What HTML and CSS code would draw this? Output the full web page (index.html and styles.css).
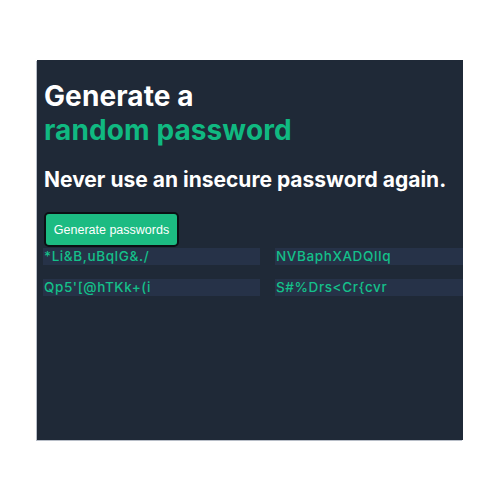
FILE: index.html
```html
<!DOCTYPE html>
<html>
<head>
<meta charset="utf-8">
<link rel="stylesheet" href="styles.css">
</head>
<body>
<main class="panel">
  <h1 class="title">Generate a<br><span class="accent">random password</span></h1>
  <p class="subtitle">Never use an insecure password again.</p>
  <button class="btn">Generate passwords</button>
  <div class="grid">
    <div class="pw">*Li&amp;B,uBqIG&amp;./</div>
    <div class="pw">NVBaphXADQlIq</div>
    <div class="pw">Qp5'[@hTKk+(i</div>
    <div class="pw">S#%Drs&lt;Cr{cvr</div>
  </div>
</main>
</body>
</html>
```
FILE: styles.css
```css
html, body {
  margin: 0;
  padding: 0;
  background: #ffffff;
}
body {
  padding: 60px 37px;
}
.panel {
  box-sizing: border-box;
  width: 426px;
  height: 380px;
  background: #1f2937;
  padding: 19px 0 0 7px;
  overflow: hidden;
  font-family: Inter, "Noto Sans", sans-serif;
  box-shadow: -1px 1px 0 #b8bec8;
}
.title {
  margin: 0;
  font-size: 28px;
  line-height: 34px;
  font-weight: 700;
  color: #ffffff;
  letter-spacing: 0.1px;
}
.accent {
  color: #10b981;
}
.subtitle {
  margin: 18px 0 0 0;
  font-size: 21px;
  line-height: 30px;
  font-weight: 700;
  color: #ffffff;
}
.btn {
  display: block;
  margin-top: 17px;
  width: 135px;
  height: 35px;
  box-sizing: border-box;
  background: #1cbb82;
  color: #ffffff;
  border: 2px solid #0b0f14;
  border-radius: 5px;
  font-family: "Liberation Sans", Arial, sans-serif;
  font-size: 12.5px;
  padding: 0;
}
.grid {
  display: grid;
  grid-template-columns: 217px 217px;
  column-gap: 15px;
  row-gap: 14px;
  margin-left: -1px;
  margin-top: 1px;
}
.pw {
  height: 17px;
  line-height: 17px;
  background: #263248;
  color: #14c08a;
  font-size: 13.5px;
  font-weight: 500;
  padding-left: 1px;
  letter-spacing: 0.6px;
}
```
